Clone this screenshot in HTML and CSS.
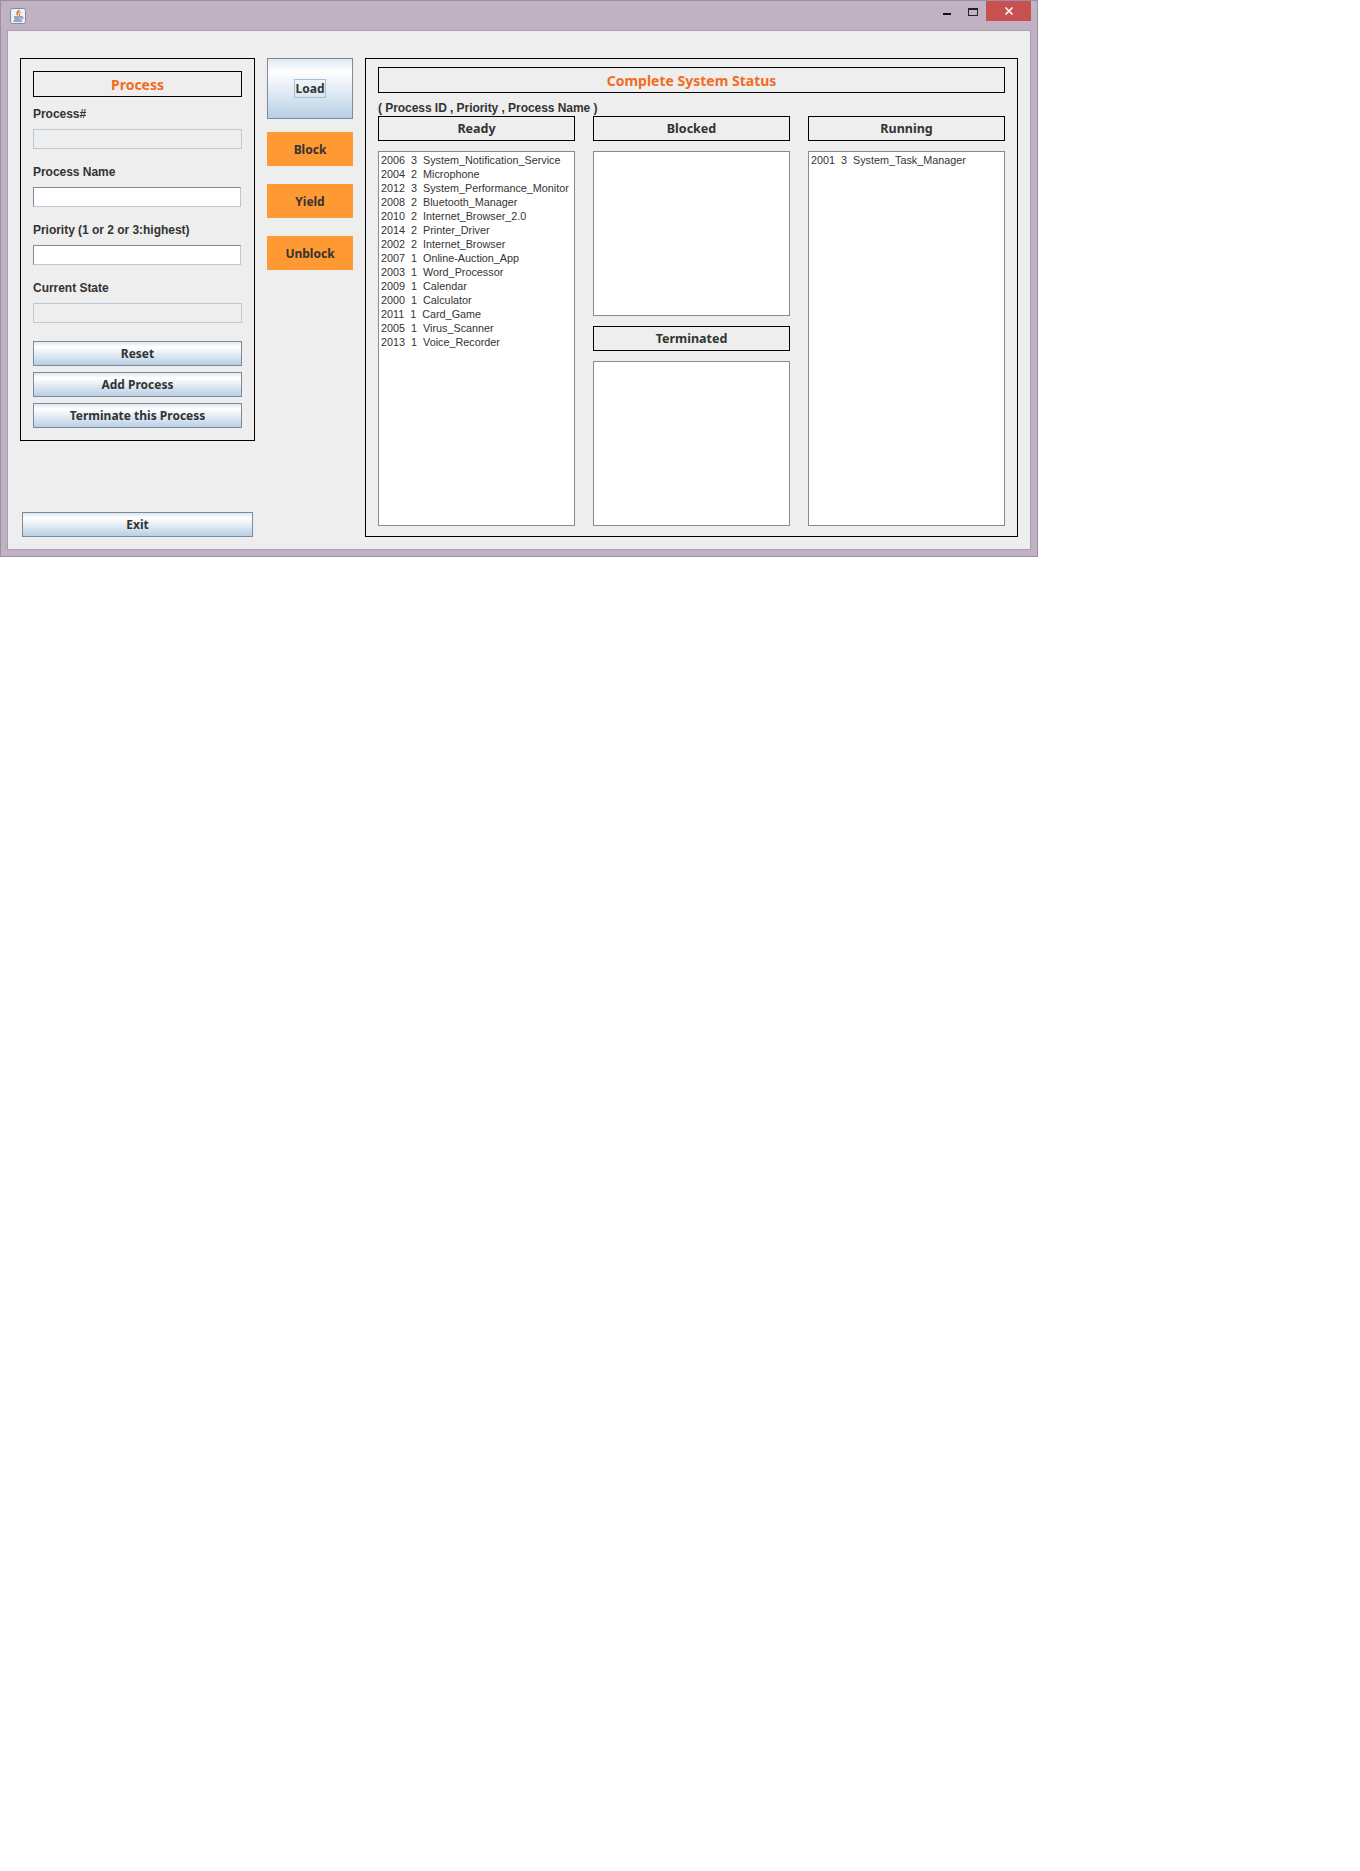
FILE: index.html
```html
<!DOCTYPE html>
<html lang="en">
<head>
    <meta charset="UTF-8">
    <meta name="viewport" content="width=device-width, initial-scale=1.0">
    <title>Process Manager</title>
    <link rel="stylesheet" href="styles.css">
</head>
<body>

    <div class="window">
        <div class="titlebar">
            <svg class="app-icon" width="16" height="16" viewBox="0 0 16 16">
                <rect x="0.5" y="0.5" width="15" height="15" rx="2" fill="#eef0f5" stroke="#7f8aa0"/>
                <path d="M9 1.5 C11 4 6.5 5 8 8 C5.5 6.5 6 4 9 1.5 Z" fill="#e0620f"/>
                <path d="M11 4 C9.5 5 9 6 9.5 8" fill="none" stroke="#e0620f"/>
                <path d="M4 9 H11 M4.5 11 H10.5 M3.5 13 H12" stroke="#3c5f8e" fill="none"/>
                <path d="M11 8.5 C13.5 8.5 13.5 11 11 11" stroke="#3c5f8e" fill="none"/>
            </svg>
            <div class="controls">
                <span class="ctl-min"></span>
                <span class="ctl-max"></span>
                <span class="ctl-close">
                    <svg width="10" height="10" viewBox="0 0 10 10">
                        <path d="M1.5 1.5 L8.5 8.5 M8.5 1.5 L1.5 8.5" stroke="#fff" stroke-width="1.6"/>
                    </svg>
                </span>
            </div>
        </div>

        <div class="content">
            <div class="left-col">
                <div class="panel process-panel">
                    <div class="heading">Process</div>

                    <label class="field-label first">Process#</label>
                    <div class="field disabled"></div>

                    <label class="field-label">Process Name</label>
                    <div class="field"></div>

                    <label class="field-label">Priority (1 or 2 or 3:highest)</label>
                    <div class="field"></div>

                    <label class="field-label">Current State</label>
                    <div class="field disabled"></div>

                    <div class="form-buttons">
                        <button class="btn">Reset</button>
                        <button class="btn">Add Process</button>
                        <button class="btn">Terminate this Process</button>
                    </div>
                </div>
                <button class="btn exit-btn">Exit</button>
            </div>

            <div class="action-col">
                <button class="btn load-btn"><span class="focus">Load</span></button>
                <button class="action-btn">Block</button>
                <button class="action-btn">Yield</button>
                <button class="action-btn">Unblock</button>
            </div>

            <div class="panel status-panel">
                <div class="heading">Complete System Status</div>
                <div class="caption">( Process ID , Priority , Process Name )</div>

                <div class="queues">
                    <div class="queue">
                        <div class="queue-title">Ready</div>
                        <div class="list">
                            <div class="row">2006  3  System_Notification_Service</div>
                            <div class="row">2004  2  Microphone</div>
                            <div class="row">2012  3  System_Performance_Monitor</div>
                            <div class="row">2008  2  Bluetooth_Manager</div>
                            <div class="row">2010  2  Internet_Browser_2.0</div>
                            <div class="row">2014  2  Printer_Driver</div>
                            <div class="row">2002  2  Internet_Browser</div>
                            <div class="row">2007  1  Online-Auction_App</div>
                            <div class="row">2003  1  Word_Processor</div>
                            <div class="row">2009  1  Calendar</div>
                            <div class="row">2000  1  Calculator</div>
                            <div class="row">2011  1  Card_Game</div>
                            <div class="row">2005  1  Virus_Scanner</div>
                            <div class="row">2013  1  Voice_Recorder</div>
                        </div>
                    </div>

                    <div class="queue">
                        <div class="queue-title">Blocked</div>
                        <div class="list"></div>
                        <div class="queue-title second">Terminated</div>
                        <div class="list"></div>
                    </div>

                    <div class="queue">
                        <div class="queue-title">Running</div>
                        <div class="list">
                            <div class="row">2001  3  System_Task_Manager</div>
                        </div>
                    </div>
                </div>
            </div>
        </div>
    </div>

</body>
</html>
```

FILE: styles.css
```css
body {
    margin: 0;
    background-color: #fff;
    font-family: "Liberation Sans", Arial, sans-serif;
    color: #333;
}

.window {
    box-sizing: border-box;
    width: 1038px;
    height: 557px;
    padding: 0 6px 6px 6px;
    border: 1px solid #9a8fa3;
    background-color: #c0b1c3;
}

.titlebar {
    display: flex;
    align-items: flex-start;
    justify-content: space-between;
    height: 29px;
}

.app-icon {
    margin: 7px 0 0 3px;
}

.controls {
    display: flex;
    align-items: flex-start;
}

.ctl-min {
    width: 8px;
    height: 2px;
    margin: 12px 17px 0 0;
    background-color: #111;
}

.ctl-max {
    box-sizing: border-box;
    width: 10px;
    height: 8px;
    margin: 7px 8px 0 0;
    border: 1px solid #222;
    border-top-width: 2px;
}

.ctl-close {
    display: flex;
    align-items: center;
    justify-content: center;
    width: 45px;
    height: 20px;
    background-color: #c75050;
}

.content {
    display: flex;
    box-sizing: border-box;
    height: 520px;
    gap: 12px;
    padding: 27px 12px 12px 12px;
    border: 1px solid #a79fae;
    background-color: #eee;
}

.left-col {
    display: flex;
    flex-direction: column;
    justify-content: space-between;
    width: 235px;
}

.panel {
    box-sizing: border-box;
    border: 1px solid #000;
}

.process-panel {
    height: 383px;
    padding: 12px;
}

.heading {
    display: flex;
    align-items: center;
    justify-content: center;
    box-sizing: border-box;
    flex: none;
    height: 26px;
    border: 1px solid #000;
    font-family: "Noto Sans", Tahoma, sans-serif;
    font-size: 14px;
    font-weight: bold;
    color: #f26c1d;
}

.field-label {
    display: block;
    height: 14px;
    margin: 16px 0 8px;
    font-size: 12px;
    line-height: 14px;
    font-weight: bold;
    letter-spacing: -0.03px;
}

.field-label.first {
    margin-top: 10px;
}

.field {
    box-sizing: border-box;
    width: 208px;
    height: 20px;
    border: 1px solid #7f8b9a;
    border-bottom-color: #b8c8d8;
    border-right-color: #b8c8d8;
    background-color: #fff;
}

.field.disabled {
    width: 209px;
    border: 1px solid #b8c9da;
    background-color: #eee;
}

.form-buttons {
    display: flex;
    flex-direction: column;
    gap: 6px;
    margin-top: 18px;
}

.btn {
    display: block;
    box-sizing: border-box;
    height: 25px;
    padding: 0;
    border: 1px solid #7a8a99;
    background: linear-gradient(#dfe8f2 0%, #fff 22%, #b8cfe5 100%);
    font-family: "Noto Sans", Tahoma, sans-serif;
    font-size: 12px;
    font-weight: bold;
    color: #333;
}

.exit-btn {
    width: 231px;
    margin-left: 2px;
}

.action-col {
    display: flex;
    flex-direction: column;
    width: 86px;
}

.load-btn {
    height: 61px;
    margin-bottom: 13px;
    padding-top: 0;
}

.focus {
    padding: 0 1px;
    border: 1px solid #a8bfd8;
}

.action-btn {
    height: 34px;
    margin-bottom: 18px;
    padding: 0;
    border: none;
    background-color: #f93;
    font-family: "Noto Sans", Tahoma, sans-serif;
    font-size: 12px;
    font-weight: bold;
    color: #333;
}

.status-panel {
    display: flex;
    flex-direction: column;
    width: 653px;
    padding: 8px 12px 10px;
}

.caption {
    flex: none;
    height: 23px;
    font-size: 12px;
    line-height: 30px;
    font-weight: bold;
    letter-spacing: -0.05px;
}

.queues {
    display: grid;
    grid-template-columns: repeat(3, 197px);
    gap: 18px;
    flex: 1;
    min-height: 0;
}

.queue {
    display: flex;
    flex-direction: column;
    min-height: 0;
}

.queue-title {
    display: flex;
    align-items: center;
    justify-content: center;
    box-sizing: border-box;
    flex: none;
    height: 25px;
    margin-bottom: 10px;
    border: 1px solid #000;
    font-family: "Noto Sans", Tahoma, sans-serif;
    font-size: 12.5px;
    font-weight: bold;
}

.queue-title.second {
    margin-top: 10px;
}

.list {
    flex: 1;
    min-height: 0;
    padding: 1px 2px;
    border: 1px solid #8a8a8a;
    background-color: #fff;
    font-size: 10.8px;
    line-height: 14px;
}

.row {
    white-space: pre;
}
```
